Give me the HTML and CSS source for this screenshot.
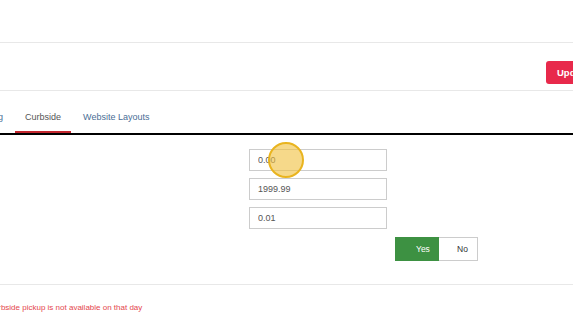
FILE: index.html
```html
<!DOCTYPE html>
<html lang="en">
<head>
<meta charset="UTF-8">
<meta name="viewport" content="width=device-width, initial-scale=1.0">
<title>Store Settings - Curbside</title>
<link rel="stylesheet" href="styles.css">
</head>
<body>
<div class="page">
    <div class="topbar"></div>

    <div class="header">
        <button type="button" class="btn-update">Update</button>
    </div>

    <ul class="tabs">
        <li><a href="#" class="tab tab-first">Ordering</a></li>
        <li><a href="#" class="tab active">Curbside</a></li>
        <li><a href="#" class="tab">Website Layouts</a></li>
    </ul>

    <form class="settings">
        <input type="text" class="field" value="0.00">
        <input type="text" class="field" value="1999.99">
        <input type="text" class="field" value="0.01">
        <div class="toggle">
            <button type="button" class="toggle-yes">Yes</button>
            <button type="button" class="toggle-no">No</button>
        </div>
    </form>

    <p class="message">Curbside pickup is not available on that day</p>

    <!-- click highlight -->
    <div class="cursor"></div>
</div>
</body>
</html>
```

FILE: styles.css
```css
body {
    font-family: "Liberation Sans", Arial, sans-serif;
    font-size: 9px;
    background-color: #fff;
    margin: 0;
    padding: 0;
}

.page {
    position: relative;
    width: 573px;
    height: 321px;
    overflow: hidden;
}

.topbar {
    height: 42px;
    border-bottom: 1px solid #e8e8e8;
}

.header {
    display: flex;
    height: 48px;
    padding-top: 18px;
    padding-left: 546px;
    box-sizing: border-box;
    border-bottom: 1px solid #e8e8e8;
}

.btn-update {
    flex-shrink: 0;
    width: 70px;
    height: 23px;
    padding: 0 0 0 11px;
    text-align: left;
    font-family: inherit;
    font-size: 9.5px;
    font-weight: bold;
    color: #fff;
    background-color: #e8294b;
    border: none;
    border-radius: 3px;
}

.tabs {
    display: flex;
    gap: 2px;
    list-style: none;
    margin: 0;
    padding: 14px 0 0 0;
    border-bottom: 2px solid #000;
}

.tab {
    display: block;
    padding: 7px 10px 8px;
    line-height: 11px;
    color: #4a6e96;
    text-decoration: none;
    border-bottom: 2px solid transparent;
}

.tab-first {
    margin-left: -42px;
}

.tab.active {
    color: #555;
    border-bottom-color: #c3262e;
}

.settings {
    display: flex;
    flex-direction: column;
    align-items: flex-start;
    margin: 0;
    padding: 14px 0 23px 249px;
    border-bottom: 1px solid #e8e8e8;
}

.field {
    width: 138px;
    height: 22px;
    margin: 0 0 7px 0;
    padding: 0 8px;
    box-sizing: border-box;
    font-family: inherit;
    font-size: 9px;
    color: #555;
    border: 1px solid #ccc;
    border-radius: 0;
}

.toggle {
    display: flex;
    margin-top: 1px;
    margin-left: 146px;
}

.toggle button {
    height: 24px;
    font-family: inherit;
    font-size: 8.5px;
    cursor: pointer;
}

.toggle-yes {
    width: 44px;
    padding: 0 10px 0 20px;
    color: #fff;
    background-color: #3d9142;
    border: 1px solid #3d9142;
}

.toggle-no {
    width: 39px;
    padding: 0 9px 0 18px;
    color: #333;
    background-color: #fff;
    border: 1px solid #ccc;
    border-left: none;
}

.message {
    margin: 0 0 0 -12px;
    padding-top: 17px;
    line-height: 11px;
    font-size: 8px;
    color: #e4464d;
}

.cursor {
    position: absolute;
    left: 268px;
    top: 142px;
    width: 36px;
    height: 36px;
    box-sizing: border-box;
    border-radius: 50%;
    border: 2px solid #e9b41f;
    background-color: rgba(240, 192, 60, 0.6);
}
```
